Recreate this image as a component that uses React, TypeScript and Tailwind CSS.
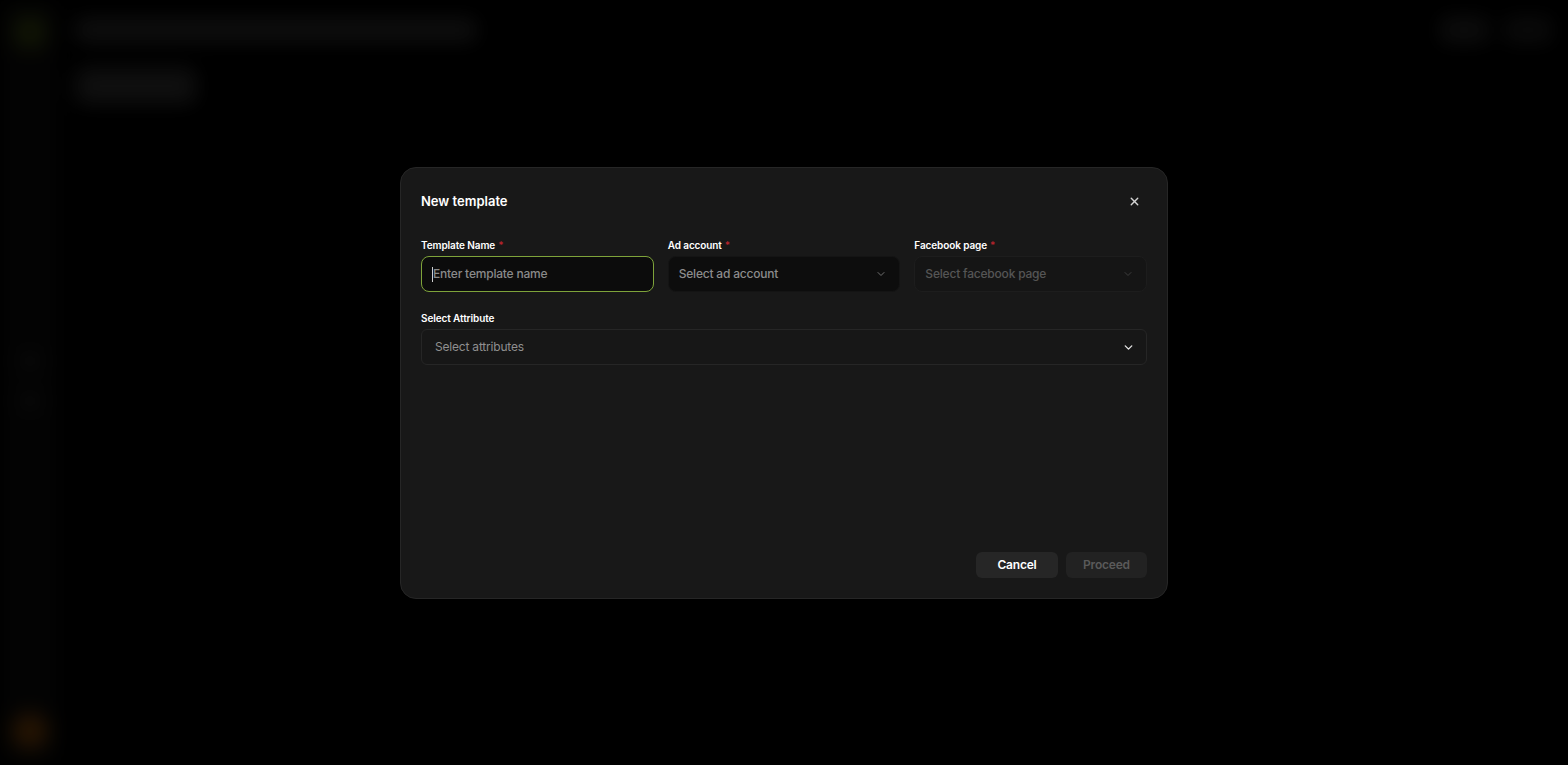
import { ChevronDown, X } from 'lucide-react';

function Label({ text, required }: { text: string; required?: boolean }) {
  return (
    <div className="mb-[6px] text-[10px] font-semibold leading-none tracking-[-0.1px] text-white">
      {text}
      {required && <span className="ml-[3px] text-[#b4232c]">*</span>}
    </div>
  );
}

export default function App() {
  return (
    <div className="relative h-[765px] w-full overflow-hidden bg-black font-['Inter',sans-serif]">
      {/* blurred page behind the modal */}
      <div className="absolute inset-0 blur-[10px] opacity-60">
        <div className="flex h-full">
          <aside className="flex w-[60px] flex-col items-center justify-between bg-[#0a0a0a] py-4">
            <div className="h-8 w-8 rounded-lg bg-[#2f3a10]" />
            <div className="flex flex-col gap-6">
              <div className="h-4 w-4 rounded bg-[#202020]" />
              <div className="h-4 w-4 rounded bg-[#202020]" />
            </div>
            <div className="h-9 w-9 rounded-full bg-[#6a3a08]" />
          </aside>
          <main className="flex-1 px-4 py-4">
            <div className="flex items-center justify-between">
              <div className="h-6 w-[400px] rounded bg-[#2a2a2a]" />
              <div className="flex gap-4">
                <div className="h-7 w-12 rounded bg-[#222]" />
                <div className="h-7 w-12 rounded bg-[#1c1c1c]" />
              </div>
            </div>
            <div className="mt-6 h-9 w-[120px] rounded-lg bg-[#2c2c2c]" />
          </main>
        </div>
      </div>
      <div className="absolute inset-0 bg-black/40" />

      <div className="relative flex h-full items-start justify-center pt-[167px]">
        <div className="flex h-[432px] w-[768px] flex-col rounded-2xl border border-[#262626] bg-[#181818] p-5 pt-[24px]">
          <div className="flex items-center justify-between">
            <h2 className="text-[13px] font-semibold leading-[18px] text-white">New template</h2>
            <button className="mr-[6px] text-[#d4d4d4]">
              <X className="h-[13px] w-[13px]" strokeWidth={2.5} />
            </button>
          </div>

          <div className="mt-[30px] grid grid-cols-3 gap-[14px]">
            <div>
              <Label text="Template Name" required />
              <div className="flex h-[36px] items-center rounded-lg border border-[#7ea33a] bg-[#0c0c0c] px-[10px]">
                <span className="h-[15px] w-px bg-[#cfcfcf]" />
                <span className="text-[12px] font-medium tracking-[-0.2px] text-[#8a8a8a]">Enter template name</span>
              </div>
            </div>
            <div>
              <Label text="Ad account" required />
              <div className="flex h-[36px] items-center justify-between rounded-lg border border-[#141414] bg-[#0d0d0d] pl-[10px] pr-[12px]">
                <span className="text-[12px] font-medium tracking-[-0.2px] text-[#8c8c8c]">Select ad account</span>
                <ChevronDown className="h-[12px] w-[12px] text-[#707070]" strokeWidth={2} />
              </div>
            </div>
            <div>
              <Label text="Facebook page" required />
              <div className="flex h-[36px] items-center justify-between rounded-lg border border-[#1d1d1d] bg-[#151515] pl-[10px] pr-[12px]">
                <span className="text-[12px] font-medium tracking-[-0.2px] text-[#555555]">Select facebook page</span>
                <ChevronDown className="h-[12px] w-[12px] text-[#3d3d3d]" strokeWidth={2} />
              </div>
            </div>
          </div>

          <div className="mt-[21px]">
            <Label text="Select Attribute" />
            <div className="flex h-[36px] items-center justify-between rounded-md border border-[#262626] bg-[#171717] pl-[13px] pr-[11px]">
              <span className="text-[12px] tracking-[-0.2px] text-[#8f8f8f]">Select attributes</span>
              <ChevronDown className="h-[13px] w-[13px] text-[#e5e5e5]" strokeWidth={2.5} />
            </div>
          </div>

          <div className="mt-auto flex justify-end gap-[8px]">
            <button className="h-[26px] w-[82px] rounded-md bg-[#262626] text-[12px] font-semibold tracking-[-0.2px] text-white">
              Cancel
            </button>
            <button className="h-[26px] w-[81px] rounded-md bg-[#222222] text-[12px] font-semibold tracking-[-0.2px] text-[#5a5a5a]">
              Proceed
            </button>
          </div>
        </div>
      </div>
    </div>
  );
}
